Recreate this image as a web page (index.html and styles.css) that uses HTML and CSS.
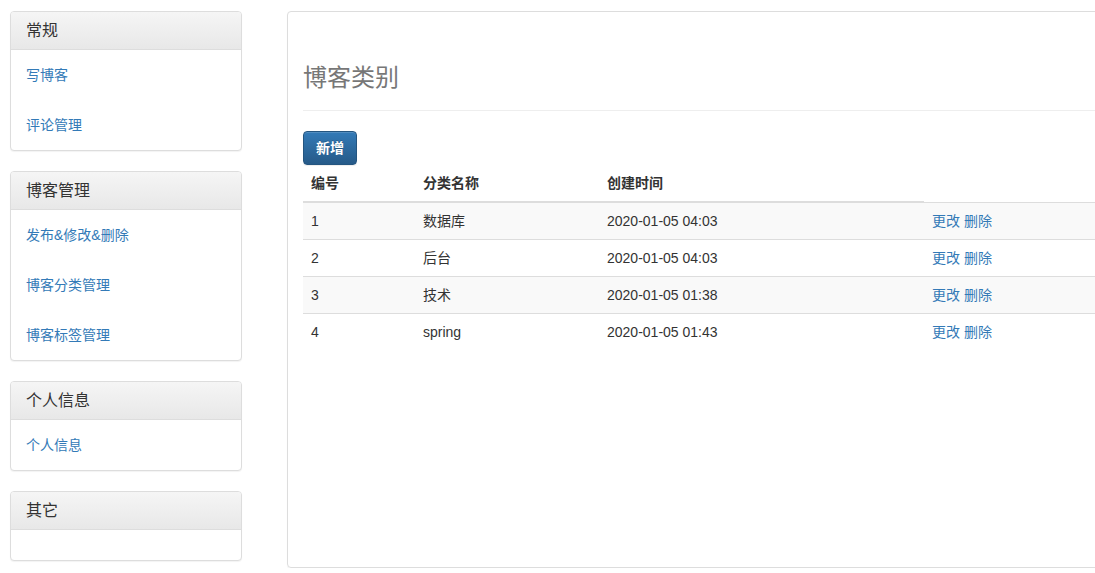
FILE: index.html
```html
<!DOCTYPE html>
<html lang="zh-CN">
<head>
<meta charset="utf-8">
<title>博客类别</title>
<link rel="stylesheet" href="styles.css">
</head>
<body>
<div class="layout">
  <aside class="sidebar">
    <div class="panel">
      <div class="panel-heading">常规</div>
      <div class="panel-body">
        <a href="#">写博客</a>
        <a href="#">评论管理</a>
      </div>
    </div>
    <div class="panel">
      <div class="panel-heading">博客管理</div>
      <div class="panel-body">
        <a href="#">发布&amp;修改&amp;删除</a>
        <a href="#">博客分类管理</a>
        <a href="#">博客标签管理</a>
      </div>
    </div>
    <div class="panel">
      <div class="panel-heading">个人信息</div>
      <div class="panel-body">
        <a href="#">个人信息</a>
      </div>
    </div>
    <div class="panel">
      <div class="panel-heading">其它</div>
      <div class="panel-body empty"></div>
    </div>
  </aside>
  <main class="main-panel">
    <div class="page-header">
      <h1>博客类别</h1>
    </div>
    <button class="btn-primary" type="button">新增</button>
    <table class="table">
      <thead>
        <tr>
          <th class="c1">编号</th>
          <th class="c2">分类名称</th>
          <th class="c3">创建时间</th>
        </tr>
      </thead>
      <tbody>
        <tr><td>1</td><td>数据库</td><td>2020-01-05 04:03</td><td><a href="#">更改</a> <a href="#">删除</a></td></tr>
        <tr><td>2</td><td>后台</td><td>2020-01-05 04:03</td><td><a href="#">更改</a> <a href="#">删除</a></td></tr>
        <tr><td>3</td><td>技术</td><td>2020-01-05 01:38</td><td><a href="#">更改</a> <a href="#">删除</a></td></tr>
        <tr><td>4</td><td>spring</td><td>2020-01-05 01:43</td><td><a href="#">更改</a> <a href="#">删除</a></td></tr>
      </tbody>
    </table>
  </main>
</div>
</body>
</html>
```

FILE: styles.css
```css
html, body {
  margin: 0;
  padding: 0;
  overflow: hidden;
  background: #fff;
}
body {
  font-family: "Liberation Sans", "Noto Sans CJK SC", sans-serif;
  font-size: 14px;
  line-height: 20px;
  color: #333;
}
a {
  color: #337ab7;
  text-decoration: none;
}
.layout {
  display: flex;
  align-items: flex-start;
  padding: 11px 0 0 10px;
  gap: 45px;
}
.sidebar {
  width: 232px;
  flex: 0 0 232px;
  display: flex;
  flex-direction: column;
  gap: 20px;
}
.panel {
  border: 1px solid #ddd;
  border-radius: 4px;
  background: #fff;
  box-shadow: 0 1px 1px rgba(0,0,0,.05);
  overflow: hidden;
}
.panel-heading {
  padding: 10px 15px;
  font-size: 16px;
  line-height: 17px;
  color: #333;
  background: linear-gradient(to bottom, #f5f5f5 0, #e8e8e8 100%);
  border-bottom: 1px solid #ddd;
}
.panel-body {
  display: flex;
  flex-direction: column;
  gap: 30px;
  padding: 15px;
}
.panel-body.empty {
  padding: 15px;
}
.main-panel {
  flex: 0 0 auto;
  box-sizing: border-box;
  width: 860px;
  height: 557px;
  border: 1px solid #ddd;
  border-radius: 4px;
  box-shadow: 0 1px 1px rgba(0,0,0,.05);
  padding: 15px;
}
.page-header {
  padding: 38px 0 9px;
  margin: 0 0 20px;
  border-bottom: 1px solid #eee;
}
.page-header h1 {
  margin: 0 0 10px;
  font-size: 24px;
  line-height: 26px;
  font-weight: 400;
  color: #777;
}
.btn-primary {
  display: block;
  box-sizing: border-box;
  height: 34px;
  padding: 6px 12px;
  font-family: inherit;
  font-size: 14px;
  line-height: 20px;
  font-weight: 700;
  color: #fff;
  background: linear-gradient(to bottom, #337ab7 0, #265a88 100%);
  border: 1px solid #245580;
  border-radius: 4px;
  text-shadow: 0 -1px 0 rgba(0,0,0,.2);
  box-shadow: inset 0 1px 0 rgba(255,255,255,.15), 0 1px 1px rgba(0,0,0,.075);
}
.table {
  width: 100%;
  border-collapse: collapse;
  border-spacing: 0;
}
.table th,
.table td {
  padding: 8px;
  text-align: left;
  vertical-align: top;
  line-height: 20px;
}
.table th {
  font-weight: 700;
  border-bottom: 2px solid #ddd;
}
.table td {
  border-top: 1px solid #ddd;
}
.table tbody tr:nth-child(odd) {
  background: #f9f9f9;
}
.table .c1 { width: 96px; }
.table .c2 { width: 168px; }
.table .c3 { width: 309px; }
```
